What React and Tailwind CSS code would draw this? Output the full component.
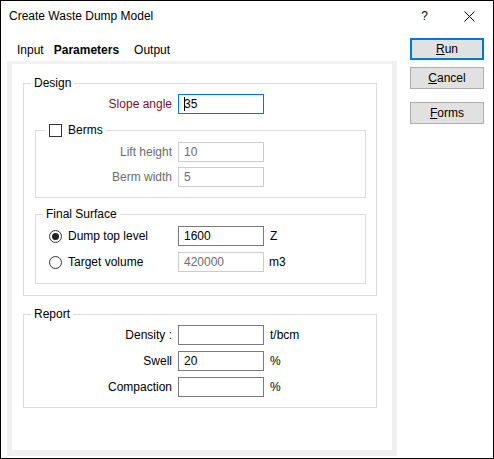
import React from 'react';

const inputStyles = {
  focus: 'border-[#0078d7] text-black',
  normal: 'border-[#7a7a7a] text-black',
  disabled: 'border-[#cccccc] text-[#6d6d6d]',
};

function Box({ value = '', state = 'normal', caret = false }) {
  return (
    <div className={`w-[86px] h-[20px] border bg-white flex items-center pl-[5px] shrink-0 ${inputStyles[state]}`}>
      {caret && <span className="w-px h-[14px] bg-black mr-[-1px]" />}
      <span>{value}</span>
    </div>
  );
}

function Row({ label, labelWidth, value, state, unit, caret, labelClass = 'text-black', className = '' }) {
  return (
    <div className={`flex items-center h-[20px] ${className}`}>
      <div className={`text-right pr-[6px] shrink-0 ${labelClass}`} style={{ width: labelWidth }}>{label}</div>
      <Box value={value} state={state} caret={caret} />
      {unit && <span className="ml-[6px]">{unit}</span>}
    </div>
  );
}

function Radio({ checked }) {
  return (
    <span className="w-[13px] h-[13px] rounded-full border border-[#333] bg-white flex items-center justify-center shrink-0">
      {checked && <span className="w-[7px] h-[7px] rounded-full bg-[#222]" />}
    </span>
  );
}

function Button({ children, primary, className = '' }) {
  return (
    <div className={`w-[74px] h-[22px] bg-[#e1e1e1] flex items-center justify-center ${primary ? 'border-2 border-[#0078d7]' : 'border border-[#adadad]'} ${className}`}>
      {children}
    </div>
  );
}

export default function App() {
  return (
    <div className="w-[494px] h-[459px] border border-black bg-white flex flex-col text-[12px] leading-[16px] text-black font-['Liberation_Sans',Arial,sans-serif]">
      {/* title bar */}
      <div className="h-[30px] flex items-center shrink-0">
        <span className="pl-[8px] flex-1">Create Waste Dump Model</span>
        <span className="mr-[36px]">?</span>
        <svg width="11" height="11" viewBox="0 0 11 11" className="mr-[18px]">
          <path d="M0.5 0.5 L10.5 10.5 M10.5 0.5 L0.5 10.5" stroke="#000" strokeWidth="1" />
        </svg>
      </div>

      <div className="flex flex-1 min-h-0">
        {/* tabs + page */}
        <div className="flex flex-col w-[390px] ml-[6px] mb-[2px]">
          <div className="h-[30px] pt-[11px] flex shrink-0">
            <span className="ml-[10px]">Input</span>
            <span className="ml-[10px] font-bold">Parameters</span>
            <span className="ml-[15px]">Output</span>
          </div>

          <div className="flex-1 border-x-[5px] border-t-[3px] border-b-[6px] border-[#f0f0f0] pl-[11px] pt-[11px] flex flex-col">
            {/* Design */}
            <fieldset className="w-[354px] border border-[#dcdcdc]">
              <legend className="ml-[7px] px-[3px]">Design</legend>
              <div className="flex flex-col pb-[11px]">
                <Row label="Slope angle" labelWidth={154} value="35" state="focus" caret labelClass="text-[#7d0f2d]" className="mt-[3px]" />

                {/* Berms */}
                <fieldset className="ml-[11px] mt-[8px] w-[331px] border border-[#dcdcdc]">
                  <legend className="ml-[9px] pl-[4px] pr-[3px] flex items-center">
                    <span className="w-[13px] h-[13px] border border-[#333] bg-white" />
                    <span className="ml-[6px]">Berms</span>
                  </legend>
                  <div className="flex flex-col pt-[4px] pb-[10px]">
                    <Row label="Lift height" labelWidth={142} value="10" state="disabled" labelClass="text-[#6d6d6d]" />
                    <Row label="Berm width" labelWidth={142} value="5" state="disabled" labelClass="text-[#6d6d6d]" className="mt-[5px]" />
                  </div>
                </fieldset>

                {/* Final Surface */}
                <fieldset className="ml-[11px] mt-[8px] w-[331px] border border-[#dcdcdc]">
                  <legend className="ml-[7px] px-[3px]">Final Surface</legend>
                  <div className="flex flex-col pt-[4px] pb-[11px]">
                    <div className="flex items-center h-[20px]">
                      <div className="w-[142px] flex items-center pl-[13px] shrink-0">
                        <Radio checked />
                        <span className="ml-[6px]">Dump top level</span>
                      </div>
                      <Box value="1600" />
                      <span className="ml-[6px]">Z</span>
                    </div>
                    <div className="flex items-center h-[20px] mt-[6px]">
                      <div className="w-[142px] flex items-center pl-[13px] shrink-0">
                        <Radio />
                        <span className="ml-[6px]">Target volume</span>
                      </div>
                      <Box value="420000" state="disabled" />
                      <span className="ml-[5px]">m3</span>
                    </div>
                  </div>
                </fieldset>
              </div>
            </fieldset>

            {/* Report */}
            <fieldset className="w-[354px] mt-[10px] border border-[#dcdcdc]">
              <legend className="ml-[7px] px-[3px]">Report</legend>
              <div className="flex flex-col pt-[3px] pb-[10px]">
                <Row label="Density :" labelWidth={154} value="" unit="t/bcm" />
                <Row label="Swell" labelWidth={154} value="20" unit="%" className="mt-[6px]" />
                <Row label="Compaction" labelWidth={154} value="" unit="%" className="mt-[6px]" />
              </div>
            </fieldset>
          </div>
        </div>

        {/* buttons */}
        <div className="flex flex-col ml-[13px] mt-[7px]">
          <Button primary><span><span className="underline">R</span>un</span></Button>
          <Button className="mt-[7px]"><span><span className="underline">C</span>ancel</span></Button>
          <Button className="mt-[13px]"><span><span className="underline">F</span>orms</span></Button>
        </div>
      </div>
    </div>
  );
}
